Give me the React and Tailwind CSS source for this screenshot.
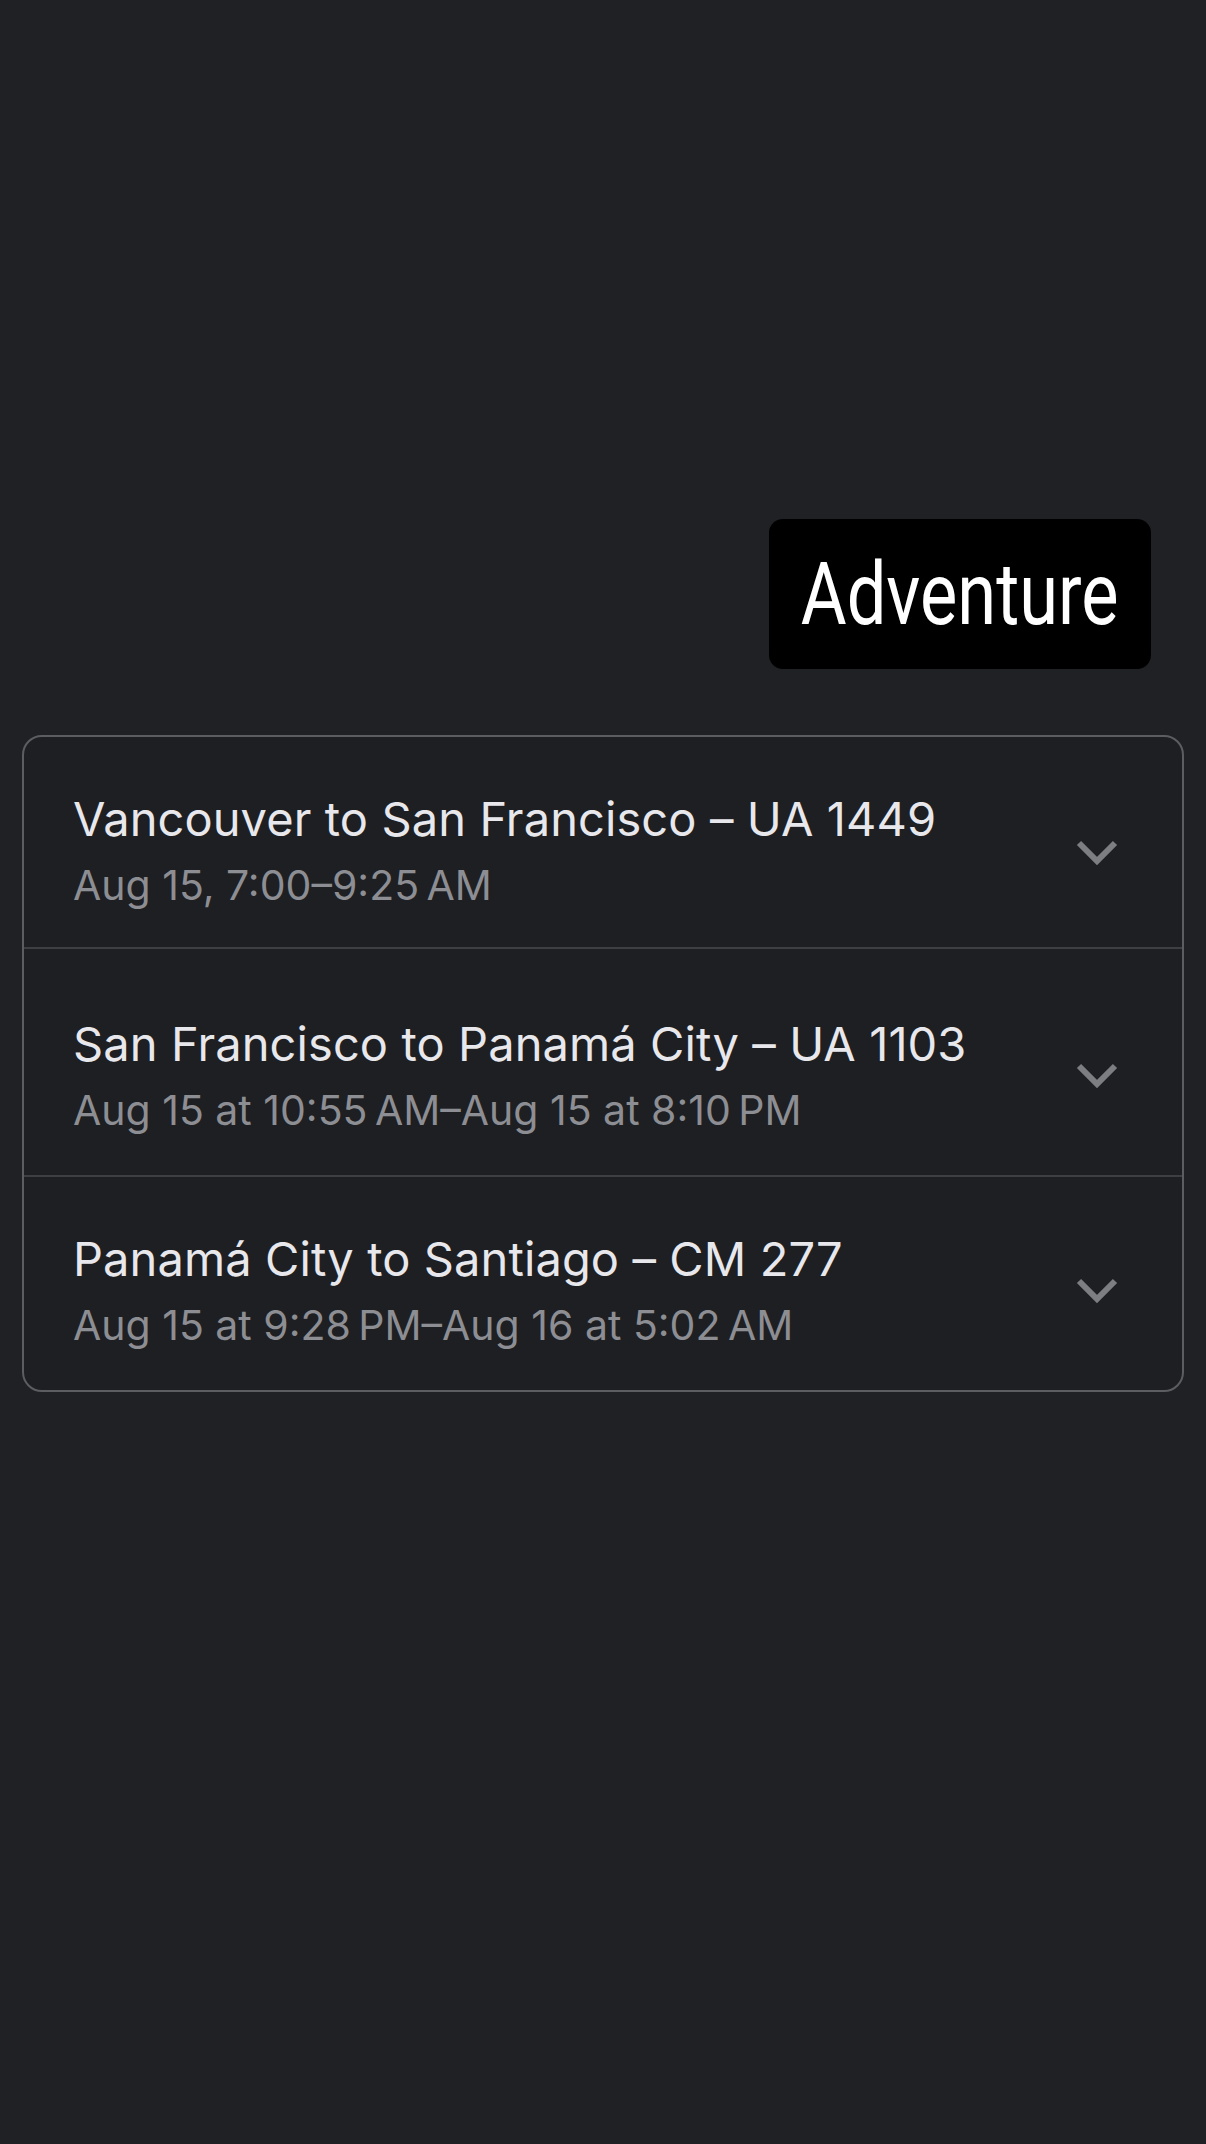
import React from 'react';

const flights = [
  { title: 'Vancouver to San Francisco – UA 1449', time: 'Aug 15, 7:00–9:25\u202FAM', h: 'h-[212px]', pt: 'pt-[48px]', ct: 'mt-[102px]' },
  { title: 'San Francisco to Panamá City – UA 1103', time: 'Aug 15 at 10:55\u202FAM–Aug 15 at 8:10\u202FPM', h: 'h-[228px]', pt: 'pt-[61px]', ct: 'mt-[113px]' },
  { title: 'Panamá City to Santiago – CM 277', time: 'Aug 15 at 9:28\u202FPM–Aug 16 at 5:02\u202FAM', h: 'h-[213px]', pt: 'pt-[48px]', ct: 'mt-[100px]' },
];

const Chevron = () => (
  <svg width="44" height="28" viewBox="0 0 44 28" className="shrink-0">
    <path d="M4 4 L22 22 L40 4" fill="none" stroke="#7d7e82" strokeWidth="6" strokeLinecap="butt" strokeLinejoin="miter" />
  </svg>
);

const FlightRow = ({ flight, last }) => (
  <div className={`flex items-start justify-between pl-[49px] pr-[63px] ${flight.h} ${last ? '' : 'border-b-2 border-[#3e3f43]'}`}>
    <div className={`flex flex-col ${flight.pt}`}>
      <span className="text-[47px] leading-[67px] text-[#e8e8ec] tracking-[0.1px]">{flight.title}</span>
      <span className="text-[41px] leading-[67px] text-[#8d8e93]">{flight.time}</span>
    </div>
    <div className={flight.ct}>
      <Chevron />
    </div>
  </div>
);

export default function App() {
  return (
    <div className="min-h-[2144px] w-full bg-[#202124] pt-[519px]" style={{ fontFamily: 'Inter, "Noto Sans", sans-serif' }}>
      <div className="flex justify-end pr-[55px]">
        <div className="flex h-[150px] w-[382px] items-center justify-center rounded-[14px] bg-black">
          <span
            className="inline-block scale-x-[0.8] text-[88px] leading-none text-white"
            style={{ fontFamily: 'Roboto, "Liberation Sans", sans-serif' }}
          >
            Adventure
          </span>
        </div>
      </div>
      <div className="mx-[22px] mt-[66px] rounded-[20px] border-2 border-[#5c5d61] bg-[#1e1f22]">
        {flights.map((f, i) => (
          <FlightRow key={i} flight={f} last={i === flights.length - 1} />
        ))}
      </div>
    </div>
  );
}
